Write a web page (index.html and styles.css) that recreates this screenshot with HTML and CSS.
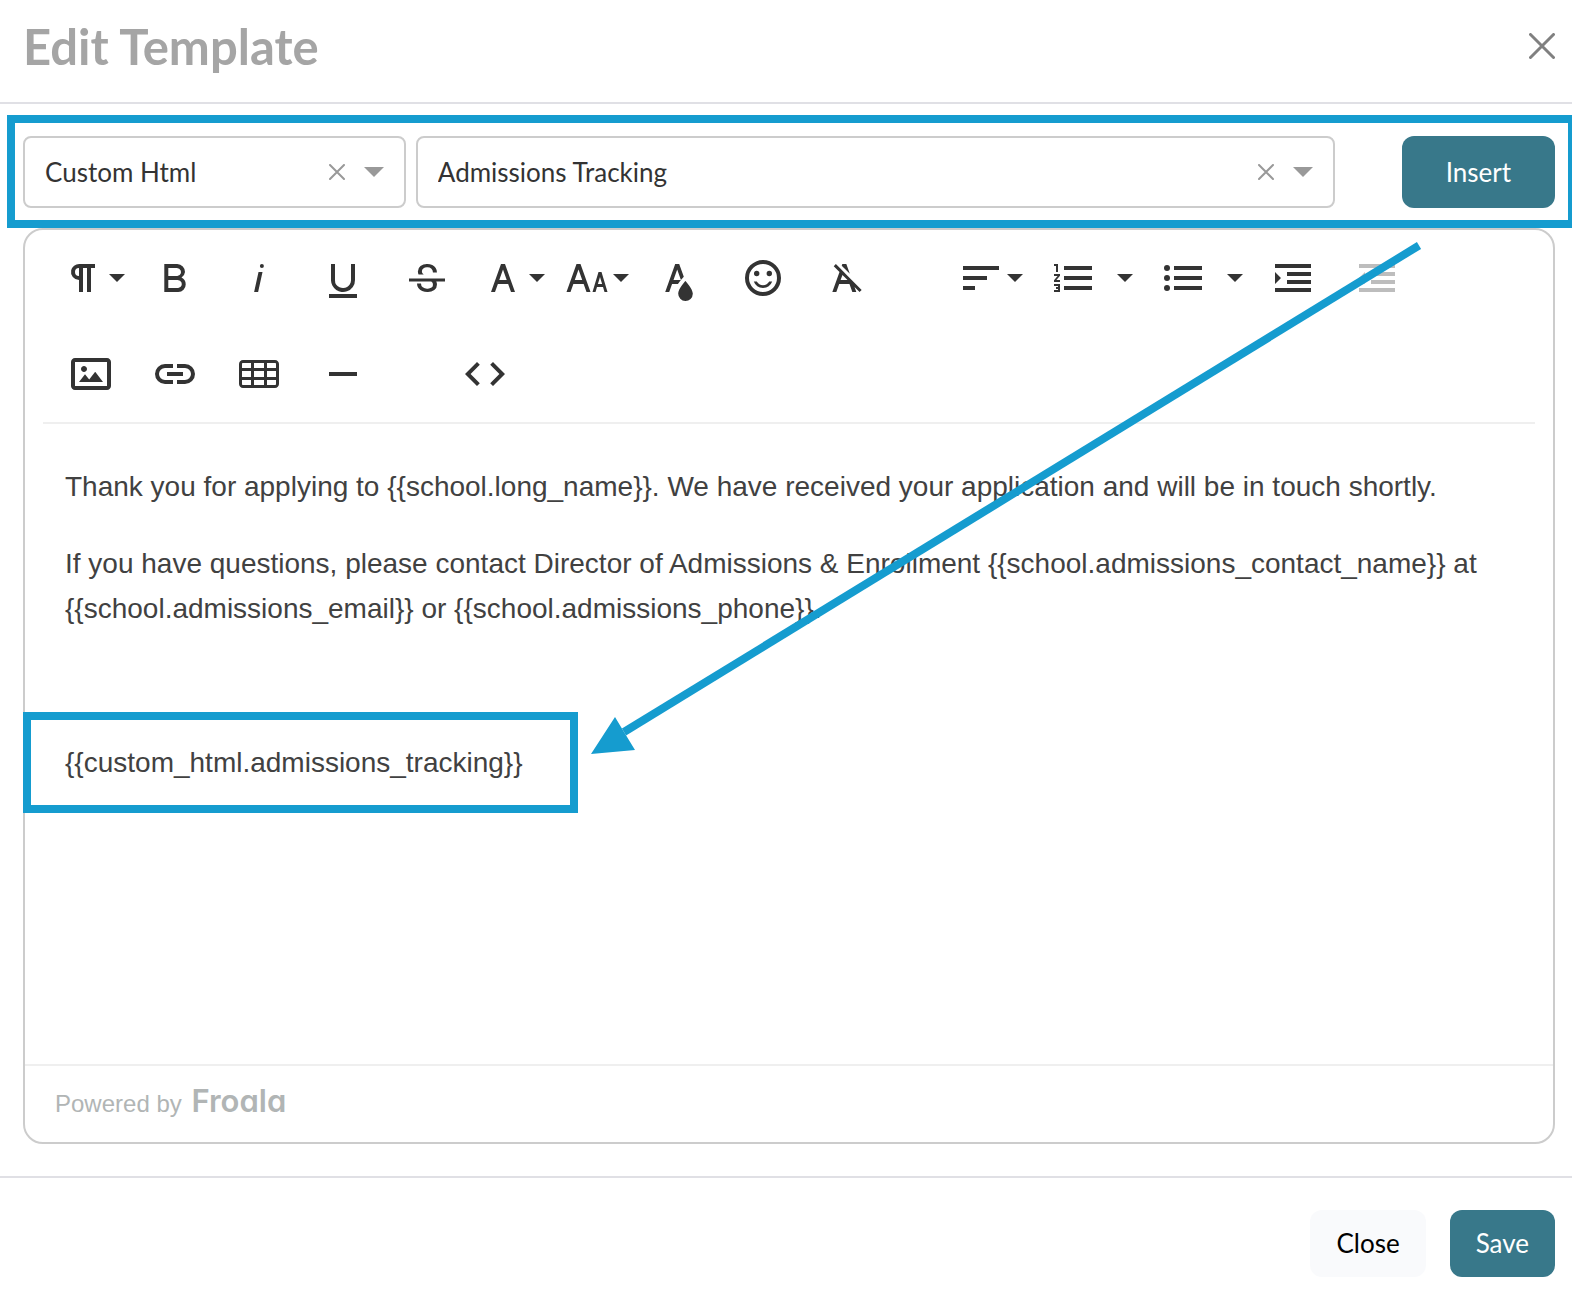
FILE: index.html
```html
<!DOCTYPE html>
<html lang="en">
<head>
<meta charset="utf-8">
<meta name="viewport" content="width=device-width, initial-scale=1">
<title>Edit Template</title>
<link rel="stylesheet" href="styles.css">
</head>
<body>
<main class="dialog">
  <header class="dialog-header">
    <h1 class="dialog-title">Edit Template</h1>
    <button class="icon-button" type="button" aria-label="Close dialog">
      <svg class="dismiss" viewBox="0 0 26 26"><path d="M1.5 1.5l23 23M24.5 1.5l-23 23"/></svg>
    </button>
  </header>

  <form class="insert-bar">
    <div class="picker">
      <select class="picker-select" aria-label="Merge field category"><option>Custom Html</option></select>
      <button class="icon-button" type="button" aria-label="Clear category"><svg class="clear" viewBox="0 0 16 16"><path d="M1 1l14 14M15 1L1 15"/></svg></button>
      <svg class="picker-caret" viewBox="0 0 20 10"><path d="M0 0h20L10 10z"/></svg>
    </div>
    <div class="picker">
      <select class="picker-select" aria-label="Merge field"><option>Admissions Tracking</option></select>
      <button class="icon-button" type="button" aria-label="Clear field"><svg class="clear" viewBox="0 0 16 16"><path d="M1 1l14 14M15 1L1 15"/></svg></button>
      <svg class="picker-caret" viewBox="0 0 20 10"><path d="M0 0h20L10 10z"/></svg>
    </div>
    <button class="button button-primary button-insert" type="button">Insert</button>
    <div class="callout callout-bar"></div>
  </form>

  <section class="editor">
    <div class="toolbar" role="toolbar" aria-label="Formatting">
      <div class="tool-group">
        <button class="tool tool-menu" type="button" aria-label="Paragraph format"><svg viewBox="0 0 24 24"><path d="M10.15,5A4.11,4.11,0,0,0,6.08,8.18,4,4,0,0,0,10,13v6h2V7h2V19h2V7h2V5ZM8,9a2,2,0,0,1,2-2v4A2,2,0,0,1,8,9Z"/></svg></button>
        <button class="tool" type="button" aria-label="Bold"><svg viewBox="0 0 24 24"><path d="M15.25,11.8h0A3.68,3.68,0,0,0,17,9a3.93,3.93,0,0,0-3.86-4H6.65V19h7a3.74,3.74,0,0,0,3.7-3.78V15.1A3.64,3.64,0,0,0,15.25,11.8ZM8.65,7h4.2a2.09,2.09,0,0,1,2,1.3,2.09,2.09,0,0,1-1.37,2.61,2.23,2.23,0,0,1-.63.09H8.65Zm4.6,10H8.65V13h4.6a2.09,2.09,0,0,1,2,1.3,2.09,2.09,0,0,1-1.37,2.61A2.23,2.23,0,0,1,13.25,17Z"/></svg></button>
        <button class="tool" type="button" aria-label="Italic"><svg viewBox="0 0 24 24"><path d="M11.76,9h2l-2.2,10h-2Zm1.68-4a1,1,0,1,0,1,1,1,1,0,0,0-1-1Z"/></svg></button>
        <button class="tool" type="button" aria-label="Underline"><svg viewBox="0 0 24 24"><path d="M19,20v2H5V20Zm-3-6.785a4,4,0,0,1-5.74,3.4A3.75,3.75,0,0,1,8,13.085V5H6v8.21a6,6,0,0,0,8,5.44,5.851,5.851,0,0,0,4-5.65V5H16Z"/></svg></button>
        <button class="tool" type="button" aria-label="Strikethrough"><svg viewBox="0 0 24 24"><path d="M3,12.20294H21v1.5H16.63422a3.59782,3.59782,0,0,1,.34942,1.5929,3.252,3.252,0,0,1-1.31427,2.6997A5.55082,5.55082,0,0,1,12.20251,19a6.4421,6.4421,0,0,1-2.62335-.539,4.46335,4.46335,0,0,1-1.89264-1.48816,3.668,3.668,0,0,1-.67016-2.15546V14.704H9.02v.11334a2.18275,2.18275,0,0,0,.85413,1.83069,3.69,3.69,0,0,0,2.32836.67926,3.38778,3.38778,0,0,0,2.07666-.5462,1.73346,1.73346,0,0,0,.7013-1.46655,1.69749,1.69749,0,0,0-.647-1.43439,3.00525,3.00525,0,0,0-.27491-.17725H3ZM16.34473,7.05981A4.18163,4.18163,0,0,0,14.6236,5.5462,5.627,5.627,0,0,0,12.11072,5,5.16083,5.16083,0,0,0,8.74719,6.06213,3.36315,3.36315,0,0,0,7.44006,8.76855a3.22923,3.22923,0,0,0,.3216,1.42786h2.59668c-.08338-.05365-.18537-.10577-.25269-.16064a1.60652,1.60652,0,0,1-.65283-1.30036,1.79843,1.79843,0,0,1,.68842-1.5108,3.12971,3.12971,0,0,1,1.96948-.55243,3.04779,3.04779,0,0,1,2.106.6687,2.35066,2.35066,0,0,1,.736,1.83258v.11341h2.00317V9.17346A3.90013,3.90013,0,0,0,16.34473,7.05981Z"/></svg></button>
        <button class="tool tool-menu" type="button" aria-label="Font family"><svg viewBox="0 0 24 24"><path d="M16,19h2L13,5H11L6,19H8l1.43-4h5.15Zm-5.86-6L12,7.8,13.86,13Z"/></svg></button>
        <button class="tool tool-menu" type="button" aria-label="Font size"><svg viewBox="0 0 24 24"><path d="M20.75,19h1.5l-3-10h-1.5l-3,10h1.5L17,16.5h3Zm-3.3-4,1.05-3.5L19.55,15Zm-5.7,4h2l-5-14h-2l-5,14h2l1.43-4h5.15ZM5.89,13,7.75,7.8,9.61,13Z"/></svg></button>
        <button class="tool" type="button" aria-label="Text color"><svg viewBox="0 0 24 24"><path d="M15.2,13.494s-3.6,3.9-3.6,6.3a3.65,3.65,0,0,0,7.3.1v-.1C18.9,17.394,15.2,13.494,15.2,13.494Zm-1.47-1.357.669-.724L12.1,5h-2l-5,14h2l1.43-4h2.943A24.426,24.426,0,0,1,13.726,12.137ZM11.1,7.8l1.86,5.2H9.244Z"/></svg></button>
        <button class="tool" type="button" aria-label="Emoticons"><svg viewBox="0 0 24 24"><path d="M11.991,3A9,9,0,1,0,21,12,8.99557,8.99557,0,0,0,11.991,3ZM12,19a7,7,0,1,1,7-7A6.99808,6.99808,0,0,1,12,19Zm3.105-5.2h1.503a4.94542,4.94542,0,0,1-9.216,0H8.895a3.57808,3.57808,0,0,0,6.21,0ZM7.5,9.75A1.35,1.35,0,1,1,8.85,11.1,1.35,1.35,0,0,1,7.5,9.75Zm6.3,0a1.35,1.35,0,1,1,1.35,1.35A1.35,1.35,0,0,1,13.8,9.75Z"/></svg></button>
        <button class="tool" type="button" aria-label="Clear formatting"><svg viewBox="0 0 24 24"><path d="M11.48,10.09l-1.2-1.21L8.8,7.41,6.43,5,5.37,6.1,8.25,9,4.66,19h2l1.43-4h5.14l1.43,4h2l-.89-2.51L18.27,19l1.07-1.06L14.59,13.2ZM8.8,13l.92-2.56L12.27,13Zm.56-7.15L9.66,5h2l1.75,4.9Z"/></svg></button>
      </div>
      <div class="tool-group">
        <button class="tool tool-menu" type="button" aria-label="Align"><svg viewBox="0 0 24 24"><path d="M3,18h6V16H3ZM3,6V8H21V6Zm0,7H15V11H3Z"/></svg></button>
        <div class="tool-split">
          <button class="tool" type="button" aria-label="Ordered list"><svg viewBox="0 0 24 24"><path d="M2.5,16h2v.5h-1v1h1V18h-2v1h3V15h-3Zm1-7h1V5h-2V6h1Zm-1,2H4.3L2.5,13.1V14h3V13H3.7l1.8-2.1V10h-3Zm5-5V8h14V6Zm0,12h14V16H7.5Zm0-5h14V11H7.5Z"/></svg></button>
          <button class="tool tool-arrow" type="button" aria-label="Ordered list styles"></button>
        </div>
        <div class="tool-split">
          <button class="tool" type="button" aria-label="Unordered list"><svg viewBox="0 0 24 24"><circle cx="4" cy="7" r="1.5"/><circle cx="4" cy="12" r="1.5"/><circle cx="4" cy="17" r="1.5"/><path d="M7.5,6V8h14V6Zm0,12h14V16H7.5Zm0-5h14V11H7.5Z"/></svg></button>
          <button class="tool tool-arrow" type="button" aria-label="Unordered list styles"></button>
        </div>
        <button class="tool" type="button" aria-label="Increase indent"><svg viewBox="0 0 24 24"><path d="M3,9v6l3-3ZM3,19H21V17H3ZM3,7H21V5H3ZM9,11H21V9H9Zm0,4H21V13H9Z"/></svg></button>
        <button class="tool" type="button" aria-label="Decrease indent" disabled><svg viewBox="0 0 24 24"><path d="M3,12l3,3V9ZM3,19H21V17H3ZM3,7H21V5H3ZM9,11H21V9H9Zm0,4H21V13H9Z"/></svg></button>
      </div>
      <div class="tool-group">
        <button class="tool" type="button" aria-label="Insert image"><svg viewBox="0 0 24 24"><path d="M14.2,11l3.8,5H6l3-3.9l2.1,2.7L14,11H14.2z M8.5,11c0.8,0,1.5-0.7,1.5-1.5S9.3,8,8.5,8S7,8.7,7,9.5C7,10.3,7.7,11,8.5,11z M22,6v12c0,1.1-0.9,2-2,2H4c-1.1,0-2-0.9-2-2V6c0-1.1,0.9-2,2-2h16C21.1,4,22,4.9,22,6z M20,8.8V6H4v12h16V8.8z"/></svg></button>
        <button class="tool" type="button" aria-label="Insert link"><svg viewBox="0 0 24 24"><path d="M11,17H7A5,5,0,0,1,7,7h4V9H7a3,3,0,0,0,0,6h4ZM17,7H13V9h4a3,3,0,0,1,0,6H13v2h4A5,5,0,0,0,17,7Zm-1,4H8v2h8Z"/></svg></button>
        <button class="tool" type="button" aria-label="Insert table"><svg viewBox="0 0 24 24"><path d="M20,5H4C2.9,5,2,5.9,2,7v2v1.5v3V15v2c0,1.1,0.9,2,2,2h16c1.1,0,2-0.9,2-2v-2v-1.5v-3V9V7C22,5.9,21.1,5,20,5z M9.5,13.5v-3h5v3H9.5z M14.5,15v2.5h-5V15H14.5z M9.5,9V6.5h5V9H9.5z M3.5,7c0-0.3,0.2-0.5,0.5-0.5h4V9H3.5V7z M8,10.5v3H3.5v-3H8z M3.5,17v-2H8v2.5H4C3.7,17.5,3.5,17.3,3.5,17z M20.5,17c0,0.3-0.2,0.5-0.5,0.5h-4V15h4.5V17z M20.5,13.5H16v-3h4.5V13.5z M16,9V6.5h4c0.3,0,0.5,0.2,0.5,0.5v2H16z"/></svg></button>
        <button class="tool" type="button" aria-label="Insert horizontal line"><svg viewBox="0 0 24 24"><path d="M5,11H19v2H5Z"/></svg></button>
      </div>
      <div class="tool-group">
        <button class="tool" type="button" aria-label="Code view"><svg viewBox="0 0 24 24"><path d="M9.4,16.6,4.8,12,9.4,7.4,8,6,2,12l6,6Zm5.2,0L19.2,12,14.6,7.4,16,6l6,6-6,6Z"/></svg></button>
      </div>
    </div>

    <div class="editor-content" contenteditable="true" role="textbox" aria-multiline="true" aria-label="Template body" spellcheck="false">
      <p>Thank you for applying to {{school.long_name}}. We have received your application and will be in touch shortly.</p>
      <p>If you have questions, please contact Director of Admissions &amp; Enrollment {{school.admissions_contact_name}} at {{school.admissions_email}} or {{school.admissions_phone}}.</p>
      <p><br></p>
      <p class="merge-tag">{{custom_html.admissions_tracking}}<span class="callout callout-tag"></span></p>
    </div>

    <footer class="editor-footer">
      <a class="powered-by" href="#">Powered by <span class="froala">Froala</span></a>
    </footer>

    <svg class="callout-arrow" viewBox="0 0 832 516">
      <path class="arrow-shaft" d="M828 3.500L33 490"/>
      <path class="arrow-head" d="M0 512L24 475L33 490L44 508z"/>
    </svg>
  </section>

  <footer class="dialog-footer">
    <button class="button button-light" type="button">Close</button>
    <button class="button button-primary" type="button">Save</button>
  </footer>
</main>
</body>
</html>
```
FILE: styles.css
```css
* {
  box-sizing: border-box;
}

body {
  margin: 0;
  background: #fff;
  color: #333;
  font: 26px/32px Lato, "Liberation Sans", sans-serif;
}

button,
select {
  margin: 0;
  padding: 0;
  border: 0;
  background: none;
  color: inherit;
  font: inherit;
  cursor: pointer;
}

svg {
  display: block;
  flex: none;
}

p {
  margin: 0;
}

.dialog {
  overflow: hidden;
}

.dialog-header {
  display: flex;
  align-items: center;
  justify-content: space-between;
  padding: 17px 17px 27px 23px;
  border-bottom: 2px solid #e0e0e5;
}

.dialog-title {
  margin: 0;
  color: #a5a5a5;
  font-size: 49px;
  line-height: 58px;
  font-weight: 700;
}

.dismiss {
  width: 26px;
  height: 26px;
  fill: none;
  stroke: #808080;
  stroke-width: 3;
  stroke-linecap: round;
}

/* Merge field pickers */

.insert-bar {
  position: relative;
  display: grid;
  grid-template-columns: 5fr 12fr auto;
  column-gap: 10px;
  padding: 32px 17px 20px 23px;
}

.picker {
  display: flex;
  align-items: center;
  gap: 19px;
  height: 72px;
  padding: 0 20px;
  border: 2px solid #ccc;
  border-radius: 8px;
}

.picker-select {
  flex: 1;
  min-width: 0;
  height: 100%;
  appearance: none;
}

.clear {
  width: 16px;
  height: 16px;
  fill: none;
  stroke: #999;
  stroke-width: 2;
  stroke-linecap: round;
}

.picker-caret {
  width: 20px;
  height: 10px;
  fill: #999;
}

.button {
  padding: 17px 26px 18px;
  border-radius: 12px;
}

.button-primary {
  background: #38788a;
  color: #fff;
}

.button-light {
  background: #f9fafc;
  color: #000;
}

.button-insert {
  margin-left: 57px;
  padding: 0 44px;
}

/* Editor */

.editor {
  position: relative;
  margin: 0 17px 32px 23px;
  border: 2px solid #ccc;
  border-radius: 20px;
}

.toolbar {
  display: flex;
  flex-wrap: wrap;
  gap: 16px 66px;
  margin: 0 18px;
  padding: 8px 10px;
  border-bottom: 2px solid #efefef;
}

.tool-group {
  display: flex;
  gap: 8px;
}

.tool-split {
  display: flex;
}

.tool {
  position: relative;
  width: 76px;
  height: 80px;
  padding: 0 14px;
}

.tool svg {
  width: 48px;
  height: 48px;
  fill: #333;
}

.tool:disabled svg {
  fill: #bdbdbd;
}

.tool-menu {
  padding: 0 22px 0 6px;
}

.tool-arrow {
  width: 26px;
  padding: 0;
}

.tool-menu::after,
.tool-arrow::after {
  content: "";
  position: absolute;
  top: 36px;
  right: 4px;
  border: 8px solid transparent;
  border-top-color: #333;
  border-bottom: 0;
}

.editor-content {
  display: flex;
  flex-direction: column;
  align-items: flex-start;
  gap: 32px;
  min-height: 640px;
  padding: 40px;
  outline: 0;
  color: #414141;
  font: 28px/45px "Liberation Sans", Arial, sans-serif;
}

.merge-tag {
  position: relative;
}

.editor-footer {
  padding: 13px 30px 16px;
  border-top: 2px solid #efefef;
}

.powered-by {
  color: #b1b5b5;
  font: 24px/44px "Liberation Sans", Arial, sans-serif;
  text-decoration: none;
}

.froala {
  margin-left: 3px;
  font: 600 31px/44px Inter, sans-serif;
  font-feature-settings: "cv11";
}

.dialog-footer {
  display: flex;
  justify-content: flex-end;
  gap: 24px;
  padding: 32px 17px 19px;
  border-top: 2px solid #e0e0e5;
}

/* Callouts drawn over the dialog */

.callout {
  position: absolute;
  border: 8px solid #159ccf;
  pointer-events: none;
}

.callout-bar {
  top: 11px;
  right: -4px;
  bottom: 0;
  left: 7px;
}

.callout-tag {
  top: -28px;
  right: -55px;
  bottom: -28px;
  left: -42px;
}

.callout-arrow {
  position: absolute;
  top: 12px;
  left: 566px;
  width: 832px;
  height: 516px;
  pointer-events: none;
}

.arrow-shaft {
  stroke: #159ccf;
  stroke-width: 8;
}

.arrow-head {
  fill: #159ccf;
}
```
